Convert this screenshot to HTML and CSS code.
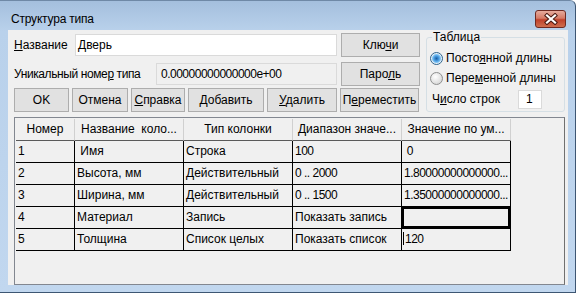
FILE: index.html
```html
<!DOCTYPE html>
<html lang="ru">
<head>
    <meta charset="UTF-8">
    <title>Структура типа</title>
    <link rel="stylesheet" href="styles.css">
</head>
<body>
    <div class="window">
        <div class="titlebar">
            <span class="title">Структура типа</span>
            <span class="close">
                <svg width="16" height="12" viewBox="0 0 16 12">
                    <path d="M4 2.5 L12 9.5 M12 2.5 L4 9.5" stroke="#4a1a12" stroke-width="4.2" stroke-linecap="square"/>
                    <path d="M4 2.5 L12 9.5 M12 2.5 L4 9.5" stroke="#ffffff" stroke-width="2.2" stroke-linecap="square"/>
                </svg>
            </span>
        </div>

        <div class="client">
            <div class="top">
                <div class="form">
                    <div class="row">
                        <label class="lbl lbl-name"><u>Н</u>азвание</label>
                        <div class="field field-name">Дверь</div>
                        <button class="btn btn-side">Клю<u>ч</u>и</button>
                    </div>
                    <div class="row row-second">
                        <label class="lbl lbl-id">Уникальный номе<u>р</u> типа</label>
                        <div class="field field-id num">0.00000000000000e+00</div>
                        <button class="btn btn-side">Паро<u>л</u>ь</button>
                    </div>
                    <div class="buttons">
                        <button class="btn b-ok">OK</button>
                        <button class="btn b-cancel">Отмена</button>
                        <button class="btn b-help"><u>С</u>правка</button>
                        <button class="btn b-add"><u>Д</u>обавить</button>
                        <button class="btn b-del"><u>У</u>далить</button>
                        <button class="btn b-move">П<u>е</u>реместить</button>
                    </div>
                </div>

                <fieldset class="group">
                    <legend>Таблица</legend>
                    <div class="radio-row">
                        <span class="radio checked"></span>
                        <span>Посто<u>я</u>нной длины</span>
                    </div>
                    <div class="radio-row">
                        <span class="radio"></span>
                        <span>Пере<u>м</u>енной длины</span>
                    </div>
                    <div class="count-row">
                        <span>Ч<u>и</u>сло строк</span>
                        <div class="field field-count">1</div>
                    </div>
                </fieldset>
            </div>

            <div class="grid-frame">
                <div class="grid">
                    <div class="hcell">Номер</div>
                    <div class="hcell">Название&nbsp; коло...</div>
                    <div class="hcell">Тип колонки</div>
                    <div class="hcell">Диапазон значе...</div>
                    <div class="hcell">Значение по ум...</div>

                    <div class="cell">1</div>
                    <div class="cell">&nbsp;Имя</div>
                    <div class="cell">Строка</div>
                    <div class="cell num">100</div>
                    <div class="cell num">&nbsp;0</div>

                    <div class="cell">2</div>
                    <div class="cell">Высота, мм</div>
                    <div class="cell">Действительный</div>
                    <div class="cell num">0 .. 2000</div>
                    <div class="cell num">1.80000000000000...</div>

                    <div class="cell">3</div>
                    <div class="cell">Ширина, мм</div>
                    <div class="cell">Действительный</div>
                    <div class="cell num">0 .. 1500</div>
                    <div class="cell num">1.35000000000000...</div>

                    <div class="cell">4</div>
                    <div class="cell">Материал</div>
                    <div class="cell">Запись</div>
                    <div class="cell">Показать запись</div>
                    <div class="cell focus"></div>

                    <div class="cell">5</div>
                    <div class="cell">Толщина</div>
                    <div class="cell">Список целых</div>
                    <div class="cell">Показать список</div>
                    <div class="cell editing num"><span class="caret"></span>120</div>
                </div>
            </div>
        </div>
    </div>
</body>
</html>
```

FILE: styles.css
```css
/* Окно диалога "Структура типа" */
body {
    margin: 0;
    background-color: #ffffff;
    font-family: "Liberation Sans", Arial, sans-serif;
    font-size: 12px;
    color: #000;
}

.window {
    width: 576px;
    height: 293px;
    box-sizing: border-box;
    display: flex;
    flex-direction: column;
    background: linear-gradient(#a4bfdd, #b9d1eb 30px, #c1d7ef);
    border-right: 1px solid #3d5673;
    border-bottom: 1px solid #3d5673;
    border-top: 1px solid #6f89a6;
    border-radius: 0 6px 0 0;
}

.titlebar {
    height: 29px;
    display: flex;
    align-items: center;
    justify-content: space-between;
    padding: 7px 9px 0 11px;
    box-sizing: border-box;
}

.title {
    font-size: 12px;
    letter-spacing: -0.2px;
}

.close {
    width: 29px;
    height: 16px;
    margin-top: -1px;
    display: flex;
    align-items: center;
    justify-content: center;
    border: 1px solid #6e2a22;
    border-radius: 3px;
    background: linear-gradient(#e6ab9d, #d57a66 45%, #c0412b 55%, #cf6f4f);
}

.client {
    flex: 1;
    margin: 0 7px 7px 8px;
    padding: 1px 3px 0 6px;
    background-color: #f0f0f0;
    display: flex;
    flex-direction: column;
}

.top {
    display: flex;
    gap: 6px;
}

.form {
    width: 406px;
    padding-top: 2px;
}

.row {
    display: flex;
    align-items: center;
    height: 23px;
}

.row-second {
    margin-top: 6px;
}

.lbl-name {
    width: 61px;
}

.lbl-id {
    width: 142px;
    white-space: nowrap;
    letter-spacing: -0.4px;
}

/* цифры у оригинала уже, чем в Liberation Sans */
.num {
    letter-spacing: -0.5px;
}

.field {
    box-sizing: border-box;
    height: 22px;
    line-height: 20px;
    border: 1px solid #dadada;
    background-color: #fff;
    padding-left: 2px;
    white-space: nowrap;
}

.field-name {
    width: 262px;
}

.field-id {
    width: 181px;
    background-color: #f0f0f0;
    padding-left: 4px;
}

.btn {
    font: inherit;
    color: #000;
    box-sizing: border-box;
    background-color: #e1e1e1;
    border: 1px solid #adadad;
    padding: 0;
    white-space: nowrap;
}

.btn-side {
    width: 79px;
    height: 24px;
    margin-left: 4px;
}

.buttons {
    display: flex;
    gap: 3px;
    margin-top: 3px;
}

.buttons .btn {
    height: 24px;
}

.b-ok { width: 55px; }
.b-cancel { width: 56px; }
.b-help { width: 54px; }
.b-add { width: 76px; }
.b-del { width: 70px; }
.b-move { width: 79px; }

/* Группа "Таблица" */
.group {
    width: 139px;
    box-sizing: border-box;
    margin: 0;
    padding: 0 3px 1px 3px;
    border: 1px solid #d5dfe5;
    border-radius: 3px;
    min-width: 0;
}

.group legend {
    padding: 0 1px;
    margin-left: 2px;
    line-height: 13px;
}

.radio-row {
    display: flex;
    align-items: center;
    gap: 3px;
    height: 20px;
}

.radio-row:first-of-type {
    margin-top: 4px;
}

.radio {
    width: 11px;
    height: 11px;
    border-radius: 50%;
    border: 1px solid #8e8f8f;
    background: radial-gradient(circle at 40% 35%, #ffffff, #dcdcdc 70%, #c8c8c8);
}

.radio.checked {
    border-color: #2c628b;
    background: radial-gradient(circle, #1b5fa0 0, #3d8fd6 2px, #7ec4f5 4px, #e6eef6 5px, #ffffff 6px);
}

.count-row {
    display: flex;
    align-items: center;
    justify-content: space-between;
    height: 22px;
    padding-left: 2px;
    padding-right: 19px;
}

.field-count {
    width: 24px;
    height: 19px;
    line-height: 17px;
    padding-left: 7px;
}

/* Таблица колонок */
.grid-frame {
    flex: 1;
    margin-top: 5px;
    border: 1px solid #828790;
    border-right-color: #707070;
    padding: 1px;
}

.grid {
    display: grid;
    grid-template-columns: 59px 109px 109px 109px 109px;
    grid-auto-rows: 22px;
}

.hcell, .cell {
    box-sizing: border-box;
    line-height: 21px;
    white-space: nowrap;
    overflow: hidden;
}

.hcell {
    text-align: center;
    border-right: 1px solid #d0d0d0;
    border-bottom: 1px solid #5a5a5a;
    background-color: #f0f0f0;
}

.cell {
    padding-left: 2px;
    border-right: 1px solid #000;
    border-bottom: 1px solid #000;
}

.cell.focus {
    box-shadow: inset 0 0 0 2px #000;
}

.cell.editing {
    padding-left: 1px;
}

.caret {
    display: inline-block;
    width: 1px;
    height: 13px;
    margin-right: 1px;
    background-color: #000;
    vertical-align: -2px;
}
```
